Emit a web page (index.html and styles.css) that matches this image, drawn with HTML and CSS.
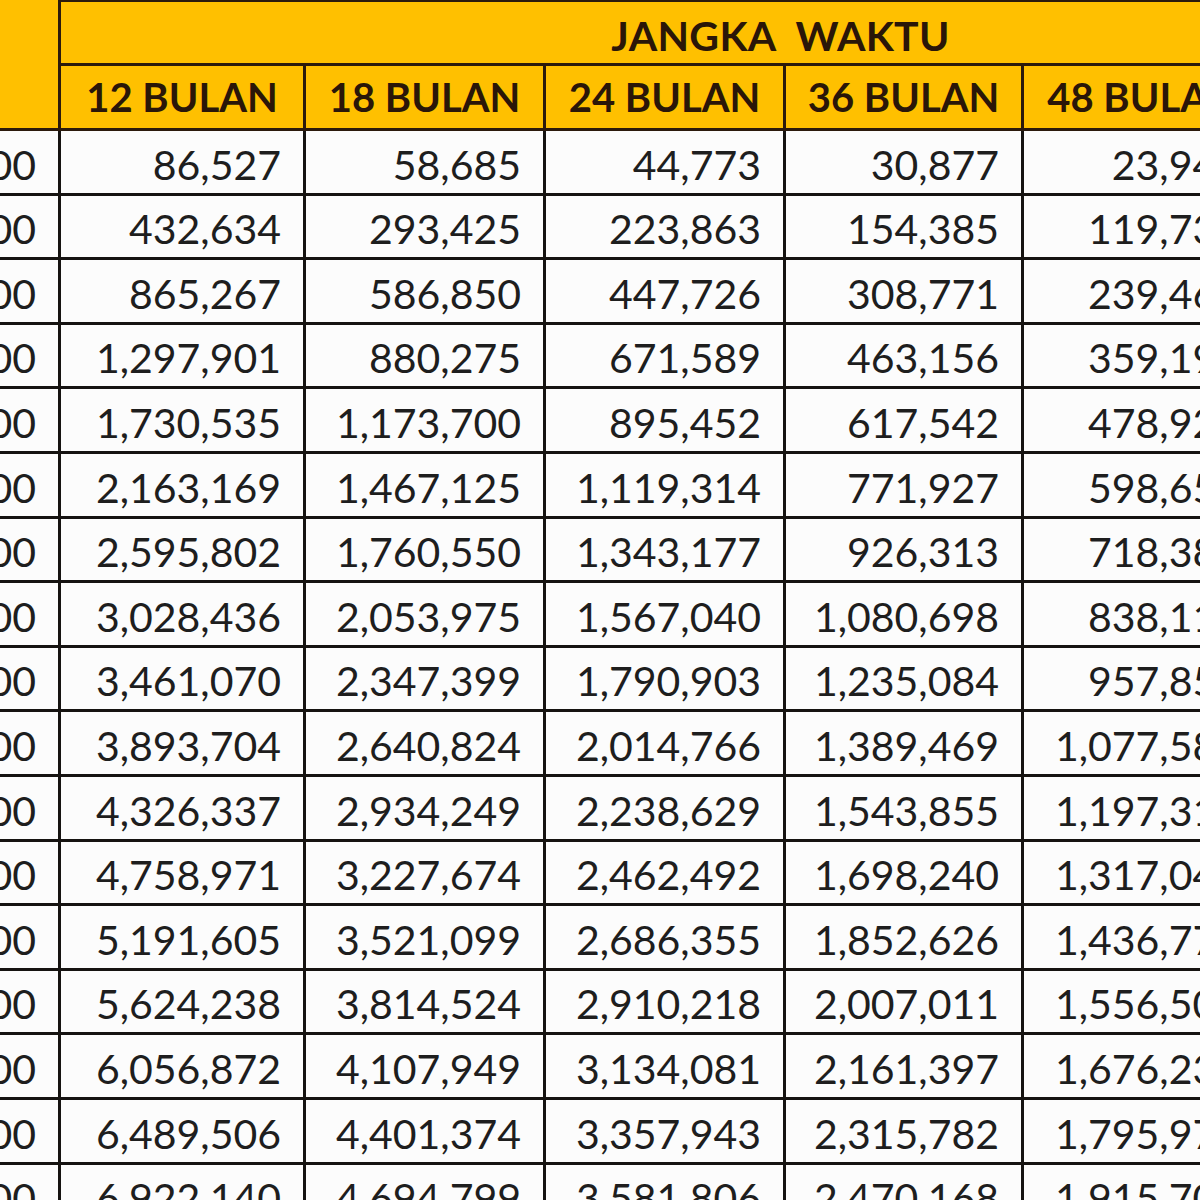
FILE: index.html
```html
<!DOCTYPE html>
<html lang="id">
<head>
<meta charset="utf-8">
<title>Tabel Angsuran</title>
<link rel="stylesheet" href="styles.css">
</head>
<body>
<div class="viewport">
<table class="sheet">
  <colgroup>
    <col class="c-plafon">
    <col class="c-12">
    <col class="c-18">
    <col class="c-24">
    <col class="c-36">
    <col class="c-48">
  </colgroup>
  <thead>
    <tr class="h1">
      <th class="plafon" rowspan="2">PLAFON</th>
      <th class="jangka" colspan="5">JANGKA&nbsp;&nbsp;WAKTU</th>
    </tr>
    <tr class="h2">
      <th>12 BULAN</th>
      <th>18 BULAN</th>
      <th>24 BULAN</th>
      <th>36 BULAN</th>
      <th>48 BULAN</th>
    </tr>
  </thead>
  <tbody>
    <tr><td>1,000,000</td><td>86,527</td><td>58,685</td><td>44,773</td><td>30,877</td><td>23,946</td></tr>
    <tr><td>5,000,000</td><td>432,634</td><td>293,425</td><td>223,863</td><td>154,385</td><td>119,731</td></tr>
    <tr><td>10,000,000</td><td>865,267</td><td>586,850</td><td>447,726</td><td>308,771</td><td>239,463</td></tr>
    <tr><td>15,000,000</td><td>1,297,901</td><td>880,275</td><td>671,589</td><td>463,156</td><td>359,194</td></tr>
    <tr><td>20,000,000</td><td>1,730,535</td><td>1,173,700</td><td>895,452</td><td>617,542</td><td>478,925</td></tr>
    <tr><td>25,000,000</td><td>2,163,169</td><td>1,467,125</td><td>1,119,314</td><td>771,927</td><td>598,657</td></tr>
    <tr><td>30,000,000</td><td>2,595,802</td><td>1,760,550</td><td>1,343,177</td><td>926,313</td><td>718,388</td></tr>
    <tr><td>35,000,000</td><td>3,028,436</td><td>2,053,975</td><td>1,567,040</td><td>1,080,698</td><td>838,119</td></tr>
    <tr><td>40,000,000</td><td>3,461,070</td><td>2,347,399</td><td>1,790,903</td><td>1,235,084</td><td>957,850</td></tr>
    <tr><td>45,000,000</td><td>3,893,704</td><td>2,640,824</td><td>2,014,766</td><td>1,389,469</td><td>1,077,582</td></tr>
    <tr><td>50,000,000</td><td>4,326,337</td><td>2,934,249</td><td>2,238,629</td><td>1,543,855</td><td>1,197,313</td></tr>
    <tr><td>55,000,000</td><td>4,758,971</td><td>3,227,674</td><td>2,462,492</td><td>1,698,240</td><td>1,317,044</td></tr>
    <tr><td>60,000,000</td><td>5,191,605</td><td>3,521,099</td><td>2,686,355</td><td>1,852,626</td><td>1,436,776</td></tr>
    <tr><td>65,000,000</td><td>5,624,238</td><td>3,814,524</td><td>2,910,218</td><td>2,007,011</td><td>1,556,507</td></tr>
    <tr><td>70,000,000</td><td>6,056,872</td><td>4,107,949</td><td>3,134,081</td><td>2,161,397</td><td>1,676,238</td></tr>
    <tr><td>75,000,000</td><td>6,489,506</td><td>4,401,374</td><td>3,357,943</td><td>2,315,782</td><td>1,795,970</td></tr>
    <tr><td>80,000,000</td><td>6,922,140</td><td>4,694,799</td><td>3,581,806</td><td>2,470,168</td><td>1,915,701</td></tr>
  </tbody>
</table>
</div>
</body>
</html>
```

FILE: styles.css
```css
html, body {
  margin: 0;
  padding: 0;
  background: #ffffff;
}

.viewport {
  width: 1200px;
  height: 1200px;
  overflow: hidden;
}

.sheet {
  border-collapse: collapse;
  table-layout: fixed;
  width: 1450px;
  margin: -1px 0 0 -188px;
  font-family: "Lato", "Liberation Sans", sans-serif;
  color: #1e1e1e;
}

.c-plafon { width: 246px; }
.c-12 { width: 245px; }
.c-18 { width: 240px; }
.c-24 { width: 240px; }
.c-36 { width: 238px; }
.c-48 { width: 241px; }

.sheet th,
.sheet td {
  border: 3px solid #161311;
  padding: 0 22px 0 0;
  white-space: nowrap;
  overflow: hidden;
}

.sheet th {
  background: #ffc000;
  color: #2a1608;
  font-weight: 700;
  font-size: 40px;
  text-align: center;
  padding: 0;
  border-color: #2b1a0c;
}

.sheet .plafon {
  color: #ffc000;
  border-top-color: #ffc000;
}

.h1 th { height: 61px; }
.h2 th { height: 62px; }

.sheet .jangka {
  padding: 5px 0 0 238px;
  height: 56px;
  font-size: 41px;
  letter-spacing: 0.3px;
}

.sheet td {
  background: #fcfcfc;
  text-align: right;
  font-size: 41px;
  height: 57px;
  padding-top: 4.6px;
  line-height: 1;
}
```
